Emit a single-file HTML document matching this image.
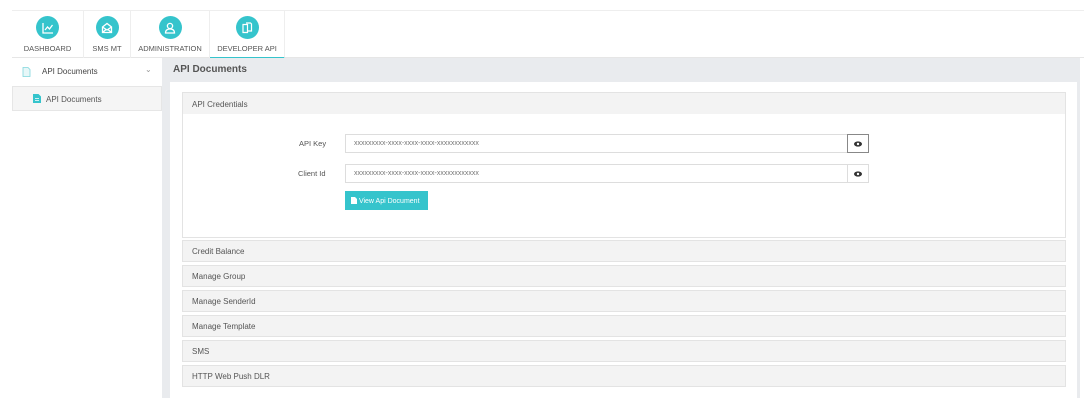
<!DOCTYPE html>
<html><head><style>
*{box-sizing:border-box;margin:0;padding:0}
body{width:1084px;height:416px;background:#fff;font-family:"Liberation Sans",sans-serif;position:relative;overflow:hidden;color:#444}
.abs{position:absolute}
.nav{left:12px;top:10px;width:1072px;height:48px;border-top:1px solid #eee;border-bottom:1px solid #e6e6e6;background:#fff}
.ni{position:absolute;top:0;height:47px;border-right:1px solid #eee;text-align:center;font-size:7.5px;color:#555}
.ni .c{width:23px;height:23px;border-radius:50%;background:#35c4cc;margin:5px auto 5px;display:flex;align-items:center;justify-content:center}
.side{left:12px;top:58px;width:150px;height:340px;background:#fff}
.gray{left:162px;top:58px;width:918px;height:340px;background:#e9ebee}
.panel{left:170px;top:82px;width:907px;height:316px;background:#fff}
.acc{position:absolute;left:182px;width:884px;background:#f3f3f3;border:1px solid #e3e3e3;font-size:8px;color:#555;padding-left:9px}
.inp{position:absolute;left:345px;width:503px;height:19px;border:1px solid #ddd;background:#fff;font-size:7px;color:#777;padding:5px 0 0 8px}
.eye{position:absolute;left:847px;width:22px;height:19px;border:1px solid #ddd;background:#fff;display:flex;align-items:center;justify-content:center}
.lbl{position:absolute;font-size:7.5px;color:#555}
</style></head><body>
<div class="abs nav">
 <div class="ni" style="left:0;width:72px"><div class="c"><svg width="12" height="12" viewBox="0 0 12 12" fill="none" stroke="#fff" stroke-width="1.3"><path d="M1 1v10h10M3 8l2.5-3 2 2L10.5 3"/></svg></div>DASHBOARD</div>
 <div class="ni" style="left:72px;width:47px"><div class="c"><svg width="12" height="12" viewBox="0 0 12 12" fill="none" stroke="#fff" stroke-width="1.3"><path d="M1.5 5L6 1.5 10.5 5v5.5h-9zM1.5 5L6 8l4.5-3M1.5 10.5L5 7.5M10.5 10.5L7 7.5"/></svg></div>SMS MT</div>
 <div class="ni" style="left:119px;width:79px"><div class="c"><svg width="12" height="12" viewBox="0 0 12 12" fill="none" stroke="#fff" stroke-width="1.3"><circle cx="6" cy="4" r="2.6"/><path d="M1.5 11c0-3 2-4 4.5-4s4.5 1 4.5 4z"/></svg></div>ADMINISTRATION</div>
 <div class="ni" style="left:198px;width:75px;border-bottom:2px solid #35c4cc;height:48px"><div class="c"><svg width="12" height="12" viewBox="0 0 12 12" fill="none" stroke="#fff" stroke-width="1.2"><path d="M2 2.5h4.5v8H2zM5 1h4.5l1 1v7H6.5"/></svg></div>DEVELOPER API</div>
</div>
<div class="abs side">
 <div style="height:28px;position:relative;font-size:8px;color:#444"><svg style="position:absolute;left:10px;top:9px" width="9" height="10" viewBox="0 0 9 10"><path d="M1 .5h5l2 2v7H1z" fill="#e7f7f8" stroke="#7fd6dc" stroke-width=".8"/></svg><span style="position:absolute;left:30px;top:9px">API Documents</span><span style="position:absolute;left:133px;top:7px;font-size:8px;color:#999">&#8964;</span></div>
 <div style="height:25px;background:#f5f5f5;border:1px solid #e6e6e6;position:relative;font-size:8px;color:#555"><svg style="position:absolute;left:20px;top:7px" width="8" height="9" viewBox="0 0 8 9"><path d="M0 0h5.5L8 2.5V9H0z" fill="#35c4cc"/><path d="M2 4.5h4M2 6.5h4" stroke="#fff" stroke-width=".8"/></svg><span style="position:absolute;left:33px;top:8px">API Documents</span></div>
</div>
<div class="abs gray"></div>
<div class="abs" style="left:173px;top:64px;font-size:10px;font-weight:bold;color:#555">API Documents</div>
<div class="abs panel"></div>
<div class="acc" style="top:92px;height:23px;padding-top:7px">API Credentials</div>
<div class="abs" style="left:182px;top:114px;width:884px;height:124px;border:1px solid #e3e3e3;border-top:none;background:#fff"></div>
<div class="lbl" style="left:299px;top:139px">API Key</div>
<div class="lbl" style="left:298px;top:169px">Client Id</div>
<div class="inp" style="top:134px">xxxxxxxxx-xxxx-xxxx-xxxx-xxxxxxxxxxxx</div>
<div class="eye" style="top:134px;border-color:#888"><svg width="8" height="6" viewBox="0 0 8 6"><ellipse cx="4" cy="3" rx="4" ry="2.6" fill="#333"/><circle cx="4" cy="3" r="1.2" fill="#fff"/></svg></div>
<div class="inp" style="top:164px">xxxxxxxxx-xxxx-xxxx-xxxx-xxxxxxxxxxxx</div>
<div class="eye" style="top:164px"><svg width="8" height="6" viewBox="0 0 8 6"><ellipse cx="4" cy="3" rx="4" ry="2.6" fill="#333"/><circle cx="4" cy="3" r="1.2" fill="#fff"/></svg></div>
<div class="abs" style="left:345px;top:191px;width:83px;height:19px;background:#35c4cc;color:#fff;font-size:7px;padding:6px 0 0 6px"><svg width="6" height="7" viewBox="0 0 6 7" style="vertical-align:-1px"><path d="M0 0h4l2 2v5H0z" fill="#fff"/></svg> View Api Document</div>
<div class="acc" style="top:240px;height:22px;padding-top:6px">Credit Balance</div>
<div class="acc" style="top:265px;height:22px;padding-top:6px">Manage Group</div>
<div class="acc" style="top:290px;height:22px;padding-top:6px">Manage SenderId</div>
<div class="acc" style="top:315px;height:22px;padding-top:6px">Manage Template</div>
<div class="acc" style="top:340px;height:22px;padding-top:6px">SMS</div>
<div class="acc" style="top:365px;height:22px;padding-top:6px">HTTP Web Push DLR</div>
</body></html>
